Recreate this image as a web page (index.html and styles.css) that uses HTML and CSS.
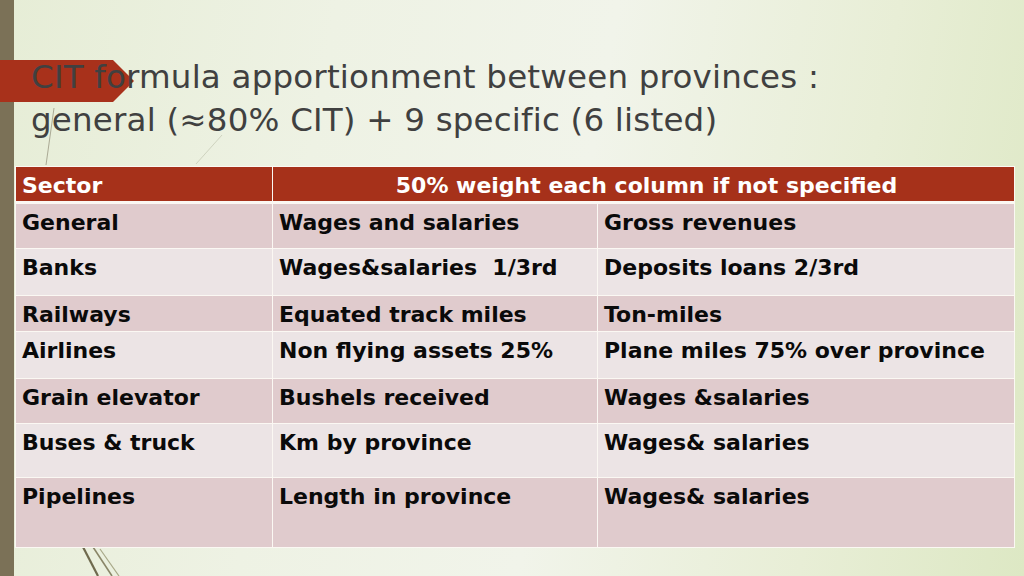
FILE: index.html
```html
<!DOCTYPE html>
<html lang="en">
<head>
<meta charset="utf-8">
<title>CIT formula apportionment</title>
<link rel="stylesheet" href="styles.css">
</head>
<body>
<div class="slide">
  <div class="side-bar"></div>
  <div class="arrow"></div>
  <svg class="deco" width="1024" height="576" viewBox="0 0 1024 576">
    <line x1="54" y1="108" x2="46" y2="165" stroke="#7b7560" stroke-width="0.8" opacity="0.7"/>
    <line x1="222" y1="135" x2="196" y2="164" stroke="#c9cdb8" stroke-width="1" opacity="0.8"/>
    <line x1="83" y1="547" x2="98" y2="576" stroke="#6f6a4e" stroke-width="2.2"/>
    <line x1="93" y1="547" x2="112" y2="576" stroke="#8a8668" stroke-width="1.6"/>
    <line x1="100" y1="549" x2="119" y2="576" stroke="#a8a888" stroke-width="1.2"/>
  </svg>
  <main class="content">
    <h1 class="title">CIT formula apportionment between provinces :<br>general (≈80% CIT) + 9 specific (6 listed)</h1>
    <table class="grid">
      <colgroup>
        <col class="c1"><col class="c2"><col class="c3">
      </colgroup>
      <thead>
        <tr class="head">
          <th class="left">Sector</th>
          <th colspan="2">50% weight each column if not specified</th>
        </tr>
      </thead>
      <tbody>
        <tr class="pink h-general"><td>General</td><td>Wages and salaries</td><td>Gross revenues</td></tr>
        <tr class="light h-banks"><td>Banks</td><td>Wages&amp;salaries&nbsp; 1/3rd</td><td>Deposits loans 2/3rd</td></tr>
        <tr class="pink h-rail"><td>Railways</td><td>Equated track miles</td><td>Ton-miles</td></tr>
        <tr class="light h-air"><td>Airlines</td><td>Non flying assets 25%</td><td>Plane miles 75% over province</td></tr>
        <tr class="pink h-grain"><td>Grain elevator</td><td>Bushels received</td><td>Wages &amp;salaries</td></tr>
        <tr class="light h-bus"><td>Buses &amp; truck</td><td>Km by province</td><td>Wages&amp; salaries</td></tr>
        <tr class="pink h-pipe"><td>Pipelines</td><td>Length in province</td><td>Wages&amp; salaries</td></tr>
      </tbody>
    </table>
  </main>
</div>
</body>
</html>
```

FILE: styles.css
```css
* { box-sizing: border-box; }
html, body { margin: 0; padding: 0; }
body { width: 1024px; height: 576px; overflow: hidden; }

.slide {
  position: relative;
  width: 1024px;
  height: 576px;
  display: flex;
  overflow: hidden;
  background: linear-gradient(100deg, #e6edd6 0%, #eef2e4 30%, #f1f4ea 55%, #e8eed6 80%, #dde8c4 100%);
  font-family: "DejaVu Sans", "Liberation Sans", sans-serif;
}

.side-bar {
  width: 14px;
  flex: 0 0 14px;
  background: #7b7157;
}

.arrow {
  position: absolute;
  left: 0;
  top: 60px;
  width: 134px;
  height: 42px;
  background: #a8311b;
  clip-path: polygon(0 0, 113px 0, 134px 50%, 113px 100%, 0 100%);
}

.deco {
  position: absolute;
  left: 0;
  top: 0;
  pointer-events: none;
}

.content {
  position: relative;
  flex: 1;
  padding-top: 56px;
}

.title {
  margin: 0 0 0 17px;
  font-weight: normal;
  font-size: 32.5px;
  line-height: 43px;
  color: #404040;
  letter-spacing: 0.2px;
  position: relative;
}

.grid {
  margin: 24px 0 0 1px;
  width: 999px;
  border-collapse: collapse;
  table-layout: fixed;
  font-weight: bold;
  font-size: 22px;
  color: #0a0a0a;
}

.c1 { width: 257px; }
.c2 { width: 325px; }
.c3 { width: 417px; }

.grid th, .grid td {
  border: 1px solid #fbf8f3;
  padding: 7px 0 0 6px;
  text-align: left;
  vertical-align: top;
  line-height: 24px;
  white-space: nowrap;
}

.head th {
  background: #a6311a;
  color: #ffffff;
  height: 36px;
  border-bottom: 3px solid #fbf8f3;
  padding-top: 7px;
  text-align: center;
}
.head th.left { text-align: left; }

.pink td { background: #e0cbcd; }
.light td { background: #ece4e5; }

.h-general { height: 46px; }
.h-banks { height: 47px; }
.h-rail { height: 36px; }
.h-air { height: 47px; }
.h-grain { height: 45px; }
.h-bus { height: 54px; }
.h-pipe { height: 70px; }
```
